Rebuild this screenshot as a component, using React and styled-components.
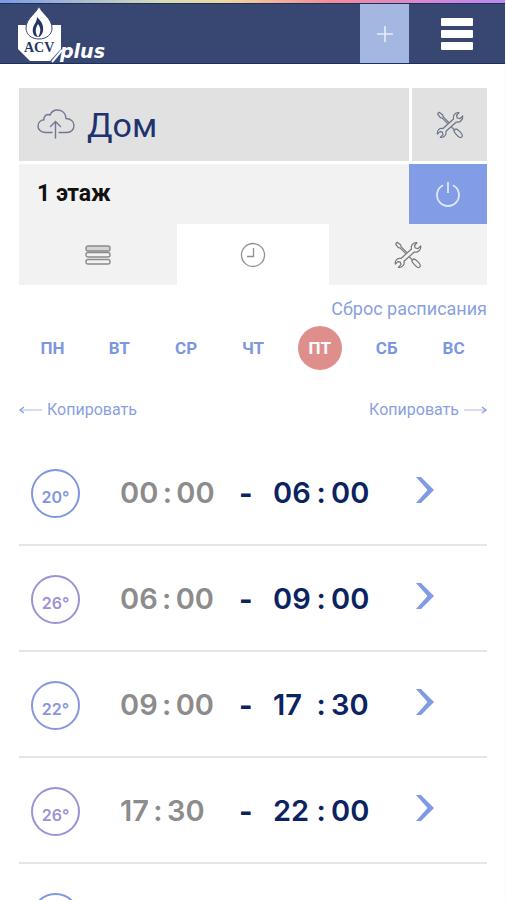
import React, { useState } from "react";
import styled, { createGlobalStyle } from "styled-components";

const GlobalStyle = createGlobalStyle`
  * {
    box-sizing: border-box;
  }
  body {
    margin: 0;
    background: #fff;
    font-family: Roboto, "Open Sans", sans-serif;
  }
  button {
    margin: 0;
    padding: 0;
    border: none;
    background: none;
    font: inherit;
    color: inherit;
    cursor: pointer;
  }
`;

const Page = styled.div`
  height: 100vh;
  overflow-y: auto;
  scrollbar-width: none;
  border-right: 1px solid #f8f8f8;
`;

const Rainbow = styled.div`
  height: 3px;
  background: linear-gradient(90deg, #7c9ae6, #d9dcb4 32%, #f0d79a 45%, #f58c96 65%, #cf86e0 90%, #b98bec);
`;

const Header = styled.header`
  display: flex;
  height: 61px;
  background: #384672;
  border-top: 1px solid #16305f;
  border-bottom: 1px solid #16305f;
`;

const LogoLink = styled.a`
  flex: 1;
  padding-left: 17px;
  overflow: hidden;
`;

const AddButton = styled.button`
  width: 49px;
  display: flex;
  align-items: center;
  justify-content: center;
  background: #a3b7e1;
`;

const MenuButton = styled.button`
  width: 96px;
  display: flex;
  flex-direction: column;
  align-items: center;
  justify-content: center;
  gap: 4px;
`;

const MenuBar = styled.span`
  width: 32px;
  height: 8px;
  border-radius: 1px;
  background: #fff;
`;

const Content = styled.main`
  padding: 24px 18px 0 19px;
`;

const HouseRow = styled.div`
  display: flex;
  gap: 3px;
  height: 73px;
`;

const House = styled.div`
  flex: 1;
  display: flex;
  align-items: center;
  gap: 12px;
  padding-left: 18px;
  background: #e1e1e1;
`;

const HouseName = styled.h1`
  margin: 0;
  font-size: 34px;
  line-height: 40px;
  font-weight: 400;
  color: #1f3270;
`;

const HouseSettings = styled.button`
  width: 75px;
  display: flex;
  align-items: center;
  justify-content: center;
  background: #e1e1e1;
`;

const FloorRow = styled.div`
  display: flex;
  height: 60px;
  margin-top: 3px;
  background: #f2f2f2;
`;

const FloorName = styled.h2`
  flex: 1;
  margin: 0;
  padding-left: 18px;
  font-size: 23px;
  line-height: 60px;
  font-weight: 700;
  color: #111;
`;

const PowerButton = styled.button`
  width: 78px;
  display: flex;
  align-items: center;
  justify-content: center;
  background: #829de6;
`;

const Tabs = styled.nav`
  display: grid;
  grid-template-columns: 158fr 152fr 158fr;
  height: 61px;
`;

const Tab = styled.button`
  display: flex;
  align-items: center;
  justify-content: center;
  background: ${(props) => (props.$active ? "#fff" : "#f2f2f2")};
`;

const ResetRow = styled.div`
  display: flex;
  justify-content: flex-end;
  padding-top: 12px;
`;

const TextLink = styled.a`
  display: flex;
  align-items: center;
  gap: 4px;
  font-size: ${(props) => (props.$small ? "16px" : "18px")};
  line-height: 24px;
  color: #8a9fdf;
  text-decoration: none;
`;

const Days = styled.div`
  display: grid;
  grid-template-columns: repeat(7, 1fr);
  justify-items: center;
  margin-top: 5px;
`;

const Day = styled.button`
  width: 44px;
  height: 44px;
  border-radius: 50%;
  font-size: 17px;
  font-weight: 700;
  color: ${(props) => (props.$active ? "#fff" : "#7d97df")};
  background: ${(props) => (props.$active ? "#df8f8b" : "transparent")};
`;

const CopyRow = styled.div`
  display: flex;
  justify-content: space-between;
  padding: 28px 0 18px;
`;

const List = styled.ul`
  margin: 0;
  padding: 0;
  list-style: none;
`;

const Slot = styled.li`
  display: grid;
  grid-template-columns: 101fr 119fr 34fr 142fr 72fr;
  align-items: center;
  height: 106px;
  padding-top: 3px;
  border-bottom: 2px solid #e6e6e6;
  font-family: Inter, Roboto, sans-serif;
  font-weight: 600;
`;

const Temp = styled.div`
  width: 49px;
  height: 49px;
  margin-left: 12px;
  padding-top: 4px;
  border: 2px solid ${(props) => props.$color};
  border-radius: 50%;
  font-size: 16px;
  line-height: 44px;
  text-align: center;
  color: ${(props) => props.$color};
`;

const Time = styled.div`
  display: flex;
  padding-bottom: 2px;
  font-size: 29px;
  line-height: 40px;
  color: ${(props) => (props.$end ? "#0b2360" : "#8c8c8c")};
`;

const Hour = styled.span`
  min-width: ${(props) => (props.$fixed ? "38px" : "0")};
`;

const Colon = styled.span`
  width: ${(props) => (props.$fixed ? "20px" : "18px")};
  text-align: center;
`;

const Dash = styled.span`
  font-size: 29px;
  line-height: 40px;
  font-weight: 700;
  color: #0b2360;
`;

const OpenButton = styled.button`
  display: flex;
  padding-bottom: 8px;
`;

const days = ["ПН", "ВТ", "СР", "ЧТ", "ПТ", "СБ", "ВС"];

const slots = [
  { temp: 20, color: "#7f97e0", start: ["00", "00"], end: ["06", "00"] },
  { temp: 26, color: "#9c92d6", start: ["06", "00"], end: ["09", "00"] },
  { temp: 22, color: "#8797de", start: ["09", "00"], end: ["17", "30"] },
  { temp: 26, color: "#9c92d6", start: ["17", "30"], end: ["22", "00"] },
  { temp: 20, color: "#7f97e0", start: ["22", "00"], end: ["00", "00"] },
];

const Logo = () => (
  <svg width="98" height="59" viewBox="0 0 98 59" aria-label="ACV plus" role="img">
    <path d="M1 21H44V45L33 57H13L1 45Z" fill="#fff" />
    <path
      d="M22 2C24 9 35 14 35 24C35 31 29 35 22 35C15 35 9 31 9 24C9 14 20 9 22 2Z"
      fill="#fff"
      stroke="#384672"
      strokeWidth="1"
    />
    <path d="M20 13C24 17 27 21 26 27C25 31 23 33 21 33C17 33 15 29 16 24C17 20 20 18 20 13Z" fill="#243764" />
    <path d="M21 20C24 24 24 28 21 33C18 29 18 25 21 20Z" fill="#fff" />
    <text x="7" y="48" fontFamily="Liberation Serif, serif" fontWeight="700" fontSize="14" fill="#243764">
      ACV
    </text>
    <path d="M35 58L45 46" stroke="#fff" strokeWidth="2" />
    <text x="43" y="54" fontFamily="DejaVu Sans, sans-serif" fontStyle="italic" fontWeight="700" fontSize="19" fill="#fff">
      plus
    </text>
  </svg>
);

const ToolsIcon = ({ color }) => (
  <svg width="28" height="28" viewBox="0 0 28 28" fill="none" stroke={color} strokeWidth="1.2" strokeLinejoin="round">
    <path d="M7 17.5L17.5 8C16.5 4.5 19 1.2 23 1.5L20.5 4.5L21.3 7L24 7.6L26.7 5C27.2 9 24 11.8 20.3 11L10 20.3C10.8 24 8 27 4.3 26.4L7 23.6L6.3 21.2L4 20.6L1.3 23C.7 19.5 3.5 16.6 7 17.5Z" />
    <path d="M1.5 2.8L3.2 1.3L6.8 4L7 5.6L13 11.6M1.5 2.8L4.3 6.6L6 6.8L11.8 12.7M15.5 16L18.3 18.7" />
    <path d="M17.8 19.8L20 17.8C21.5 18 26 22.5 26.3 24.2C26.5 25.8 25 27 23.5 26.3C22 25.5 18 21.5 17.8 19.8Z" />
  </svg>
);

const CloudIcon = () => (
  <svg width="38" height="34" viewBox="0 0 38 34" fill="none" stroke="#707894" strokeWidth="1.4" strokeLinecap="round">
    <path d="M15 24.5H8C4 24.5 1 21.5 1 18C1 14.5 3.5 12 7 11.7C6.5 8 10 5.5 13 7C14.5 3.5 17.5 2 20.5 2C25.5 2 29 5.5 29 10.5C33.5 10.5 37 13.5 37 17.5C37 21.5 34 24.5 30 24.5H22" />
    <path d="M18.5 30V14M13.5 18.5L18.5 13.5L23.5 18.5" />
  </svg>
);

const PowerIcon = () => (
  <svg width="26" height="26" viewBox="0 0 26 26" fill="none" stroke="#dfe7fb" strokeWidth="1.8">
    <path d="M8 4.2A11 11 0 1 0 18 4.2" />
    <path d="M13 1V12" />
  </svg>
);

const ListIcon = () => (
  <svg width="26" height="20" viewBox="0 0 26 20" fill="none" stroke="#8b8b8b" strokeWidth="1.4">
    <rect x="1" y="1" width="24" height="5" rx="2" fill="#d4d4d4" />
    <rect x="1" y="7.5" width="24" height="4.5" rx="2" />
    <rect x="1" y="14.5" width="24" height="4.5" rx="2" />
  </svg>
);

const ClockIcon = () => (
  <svg width="26" height="26" viewBox="0 0 26 26" fill="none" stroke="#8f8f8f" strokeWidth="1.3">
    <circle cx="13" cy="13" r="11.5" />
    <path d="M13.5 6V14.5H7" />
  </svg>
);

const Arrow = ({ right }) => (
  <svg width="24" height="8" viewBox="0 0 24 8" fill="none" stroke="#8a9fdf" strokeWidth="1">
    <path d="M1 4H23" opacity="0.7" />
    <path d={right ? "M19 1L23 4L19 7" : "M5 1L1 4L5 7"} strokeWidth="1.4" />
  </svg>
);

const Chevron = () => (
  <svg width="20" height="28" viewBox="0 0 20 28" fill="#7f9be2">
    <path d="M1 1H6L19 14L6 27H1L12.5 14Z" />
  </svg>
);

const App = () => {
  const [day, setDay] = useState("ПТ");
  const [tab, setTab] = useState("schedule");

  return (
    <Page>
      <GlobalStyle />
      <Rainbow />
      <Header>
        <LogoLink href="#">
          <Logo />
        </LogoLink>
        <AddButton aria-label="Добавить">
          <svg width="16" height="16" viewBox="0 0 16 16" stroke="#e6edfa" strokeWidth="1.6">
            <path d="M0 8H16M8 0V16" />
          </svg>
        </AddButton>
        <MenuButton aria-label="Меню">
          <MenuBar />
          <MenuBar />
          <MenuBar />
        </MenuButton>
      </Header>
      <Content>
        <HouseRow>
          <House>
            <CloudIcon />
            <HouseName>Дом</HouseName>
          </House>
          <HouseSettings aria-label="Настройки дома">
            <ToolsIcon color="#6c7488" />
          </HouseSettings>
        </HouseRow>
        <FloorRow>
          <FloorName>1 этаж</FloorName>
          <PowerButton aria-label="Питание">
            <PowerIcon />
          </PowerButton>
        </FloorRow>
        <Tabs>
          <Tab aria-label="Список" $active={tab === "list"} onClick={() => setTab("list")}>
            <ListIcon />
          </Tab>
          <Tab aria-label="Расписание" $active={tab === "schedule"} onClick={() => setTab("schedule")}>
            <ClockIcon />
          </Tab>
          <Tab aria-label="Настройки" $active={tab === "settings"} onClick={() => setTab("settings")}>
            <ToolsIcon color="#777" />
          </Tab>
        </Tabs>
        <ResetRow>
          <TextLink href="#">Сброс расписания</TextLink>
        </ResetRow>
        <Days>
          {days.map((d) => (
            <Day key={d} $active={d === day} onClick={() => setDay(d)}>
              {d}
            </Day>
          ))}
        </Days>
        <CopyRow>
          <TextLink href="#" $small>
            <Arrow />
            Копировать
          </TextLink>
          <TextLink href="#" $small>
            Копировать
            <Arrow right />
          </TextLink>
        </CopyRow>
        <List>
          {slots.map((slot) => (
            <Slot key={slot.start[0]}>
              <Temp $color={slot.color}>{slot.temp}°</Temp>
              <Time>
                <Hour>{slot.start[0]}</Hour>
                <Colon>:</Colon>
                <span>{slot.start[1]}</span>
              </Time>
              <Dash>-</Dash>
              <Time $end>
                <Hour $fixed>{slot.end[0]}</Hour>
                <Colon $fixed>:</Colon>
                <span>{slot.end[1]}</span>
              </Time>
              <OpenButton aria-label="Изменить">
                <Chevron />
              </OpenButton>
            </Slot>
          ))}
        </List>
      </Content>
    </Page>
  );
};

export default App;
